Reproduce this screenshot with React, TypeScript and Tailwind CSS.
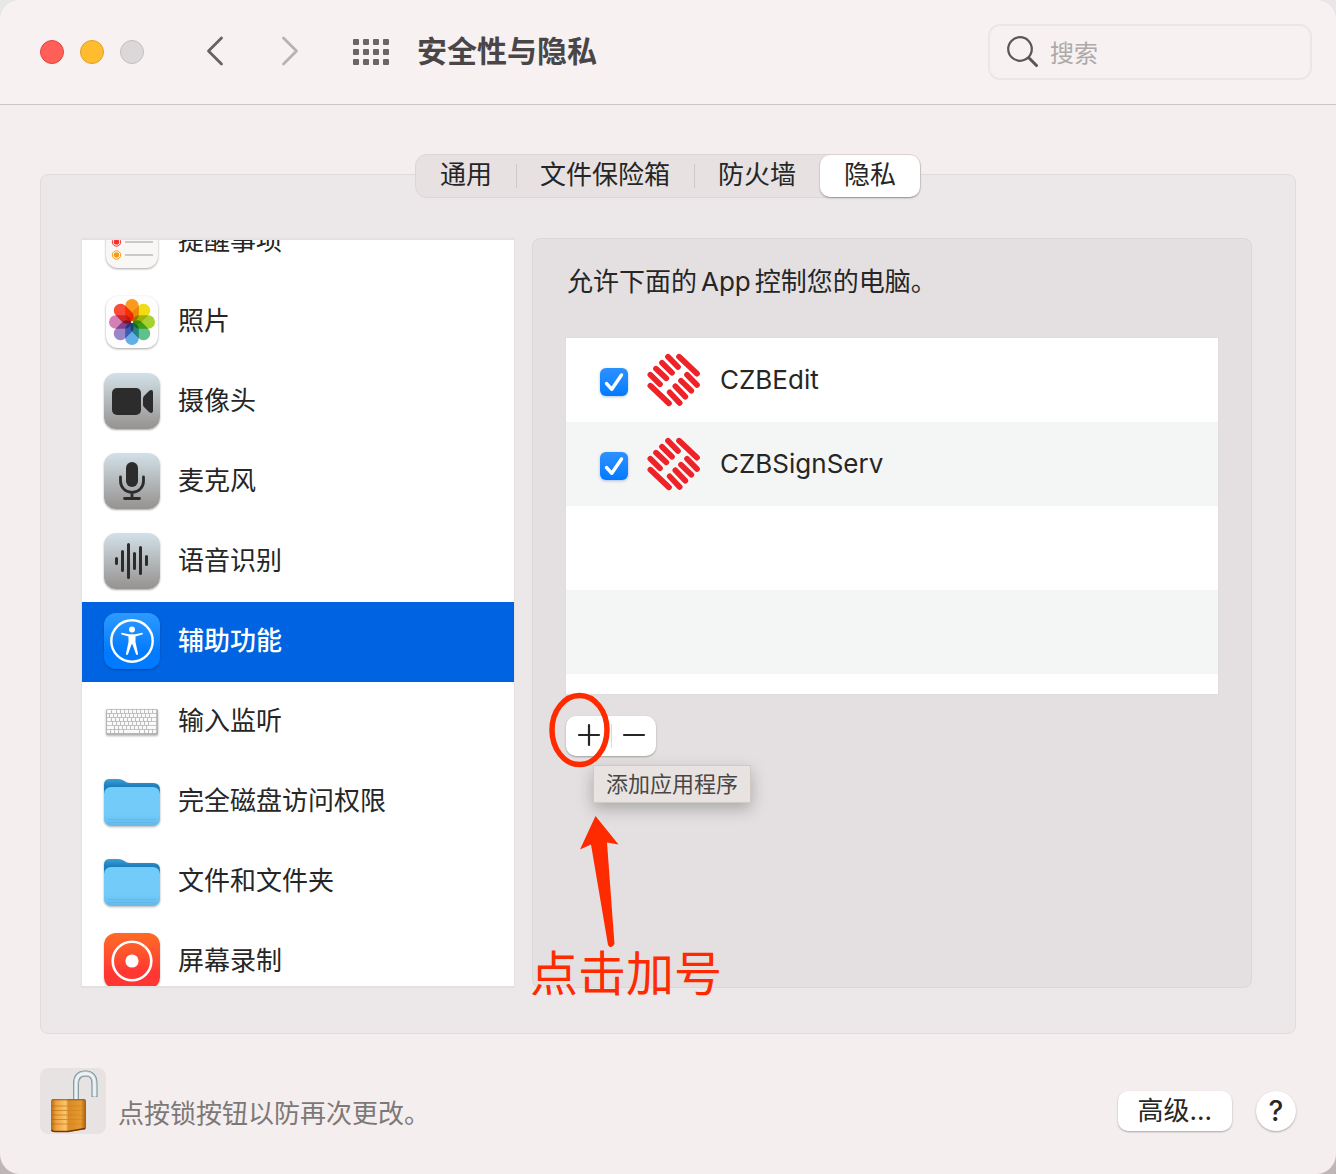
import { useState, type ReactNode } from "react";

type TabId = "general" | "filevault" | "firewall" | "privacy";
type AppEntry = { id: string; name: string; allowed: boolean };

const tabs: { id: TabId; label: string }[] = [
  { id: "general", label: "通用" },
  { id: "filevault", label: "文件保险箱" },
  { id: "firewall", label: "防火墙" },
  { id: "privacy", label: "隐私" },
];

// Icons of the sidebar, all drawn on a 56x56 tile

function RemindersIcon() {
  return (
    <svg viewBox="0 -1 56 56" className="size-14 drop-shadow-[0_1px_1px_rgba(0,0,0,0.35)]" aria-hidden="true">
      <rect x="2" y="2" width="52" height="52" rx="12" fill="#f8f7f6" />
      {[
        { y: 15, color: "#2f8cf7" },
        { y: 28, color: "#f5322d" },
        { y: 41, color: "#f29b13" },
      ].map((row) => (
        <g key={row.y}>
          <circle cx="12.5" cy={row.y} r="4.200" fill="#fff" stroke={row.color} strokeWidth="1" />
          <circle cx="12.5" cy={row.y} r="2.800" fill={row.color} />
          <path d={`M21 ${row.y}h28`} stroke="#bdbdbd" strokeWidth="1.600" />
        </g>
      ))}
    </svg>
  );
}

function PhotosIcon() {
  const petals = ["#fb9a1c", "#f0dc14", "#a6d22f", "#5dc08d", "#62aee6", "#9a86c9", "#d580b5", "#fb4a37"];
  return (
    <svg viewBox="0 -1 56 56" className="size-14 drop-shadow-[0_1px_1px_rgba(0,0,0,0.35)]" aria-hidden="true">
      <rect x="2" y="2" width="52" height="52" rx="12" fill="#fdfdfd" />
      <g className="isolate">
        {petals.map((color, i) => (
          <rect
            key={color}
            x="21.2"
            y="5"
            width="13.600"
            height="22.500"
            rx="6.800"
            fill={color}
            transform={`rotate(${i * 45} 28 28)`}
            className="mix-blend-multiply"
          />
        ))}
      </g>
      <circle cx="28" cy="28" r="1" fill="#fff" />
    </svg>
  );
}

function GrayTile({ children }: { children: ReactNode }) {
  return (
    <span className="flex size-14 rounded-xl bg-linear-to-b from-[#d3e1e8] to-[#969290] shadow-[0_1px_2px_rgba(0,0,0,0.35)]">
      <svg viewBox="0 0 56 56" className="size-14" fill="#2c2c2c" aria-hidden="true">
        {children}
      </svg>
    </span>
  );
}

function CameraIcon() {
  return (
    <GrayTile>
      <rect x="8" y="15" width="29" height="27" rx="5" />
      <path d="M39 25.500q0-1.500 1-2.500l5-5q3-2 4 .5v20q-1 2.500-4 .5l-5-5q-1-1-1-2.500z" />
    </GrayTile>
  );
}

function MicrophoneIcon() {
  return (
    <GrayTile>
      <rect x="22" y="9" width="12" height="25" rx="6" />
      <path
        d="M16.500 24v4a11.500 11.500 0 0 0 23 0v-4M28 40v5M20.500 45.500h15"
        fill="none"
        stroke="#2c2c2c"
        strokeWidth="2.8"
        strokeLinecap="round"
      />
    </GrayTile>
  );
}

function SpeechIcon() {
  return (
    <GrayTile>
      <path
        d="M12.500 25.500v5M18.500 18.500v19M24.500 11.500v33M30.500 20.500v15M36.500 14.500v26M42.500 23.500v8"
        fill="none"
        stroke="#2c2c2c"
        strokeWidth="3"
        strokeLinecap="round"
      />
    </GrayTile>
  );
}

function AccessibilityIcon() {
  return (
    <span className="flex size-14 rounded-xl bg-linear-to-b from-[#2b9bff] to-[#007aff] to-70% shadow-[0_1px_2px_rgba(0,0,0,0.3)]">
      <svg viewBox="0 0 56 56" className="size-14" fill="#fff" aria-hidden="true">
        <circle cx="28" cy="28" r="20.7" fill="none" stroke="#fff" strokeWidth="2.4" />
        <circle cx="28" cy="16.500" r="3" />
        <path d="M17.600 19.700l7.400 1.500h6l7.400-1.500q1.300 1-.2 1.900l-6.700 1.800v5.600l2.600 12q-.6 1.600-2 .5l-3.700-10.200h-.8l-3.700 10.200q-1.400 1.100-2-.5l2.600-12v-5.600l-6.700-1.800q-1.500-.9-.2-1.900z" />
      </svg>
    </span>
  );
}

function KeyboardIcon() {
  const rows = [
    { y: 17, x: [4, 9, 14, 18, 22, 26, 30, 34, 38, 42, 46, 50] },
    { y: 21, x: [4, 7, 11, 15, 19, 23, 27, 31, 35, 39, 43, 47] },
    { y: 25, x: [4, 9, 13, 17, 21, 25, 29, 33, 37, 41, 45, 49] },
    { y: 29, x: [4, 10, 14, 18, 22, 26, 30, 34, 38, 42, 46] },
    { y: 33, x: [4, 12, 16, 20, 24, 28, 32, 36, 40, 44] },
    { y: 37, x: [4, 8, 12, 16, 21, 37, 42, 46, 50] },
  ];
  return (
    <svg viewBox="0 -1 56 56" className="size-14 drop-shadow-[0_1px_1px_rgba(0,0,0,0.3)]" aria-hidden="true">
      <rect x="2" y="15" width="52" height="26" rx="1.500" fill="#b5b5b5" />
      {rows.map((row) =>
        row.x.map((x, i) => (
          <rect
            key={`${row.y}-${x}`}
            x={x - 1}
            y={row.y - 1.2}
            width={(row.x[i + 1] ?? 54) - x - 0.9}
            height="3.100"
            rx="0.500"
            fill="#fafafa"
          />
        ))
      )}
    </svg>
  );
}

function FolderIcon() {
  return (
    <svg viewBox="0 -1 56 56" className="size-14 drop-shadow-[0_1px_1px_rgba(0,0,0,0.3)]" aria-hidden="true">
      <defs>
        <linearGradient id="folder-back" x1="0" y1="0" x2="0" y2="1">
          <stop offset="0" stopColor="#3b9fd6" />
          <stop offset="0.250" stopColor="#1b7fbd" />
        </linearGradient>
        <linearGradient id="folder-front" x1="0" y1="0" x2="0" y2="1">
          <stop offset="0.700" stopColor="#72cbf9" />
          <stop offset="1" stopColor="#64baeb" />
        </linearGradient>
      </defs>
      <path d="M0 10.500Q0 5 6 5h8c6 0 7 4 12 4h23q7 0 7 7v18H0z" fill="url(#folder-back)" />
      <rect y="13" width="56" height="39" rx="7" fill="url(#folder-front)" />
      <path d="M4 45.500h48M4 48.500h48" stroke="#5fb4e4" strokeWidth="0.700" />
    </svg>
  );
}

function ScreenRecordingIcon() {
  return (
    <span className="flex size-14 rounded-xl bg-linear-to-b from-[#ff6a25] to-[#ff3632] to-70% shadow-[0_1px_2px_rgba(0,0,0,0.3)]">
      <svg viewBox="0 0 56 56" className="size-14" aria-hidden="true">
        <circle cx="28" cy="28" r="19.300" fill="none" stroke="#fff" strokeWidth="2.600" />
        <circle cx="28" cy="28" r="6.600" fill="#fff" />
      </svg>
    </span>
  );
}

function BankLogo() {
  return (
    <svg viewBox="22 25 162 162" className="size-[54px] shrink-0" aria-hidden="true">
      <path
        d="M85 36l30 31M67 54l30 30M49 72l31 29M32 90l29 29M118 36l54 51M32 123l56 53M142 90l30 31M124 108l31 30M107 125l30 31M90 143l30 32"
        stroke="#ee2229"
        strokeWidth="17"
        strokeLinecap="round"
      />
    </svg>
  );
}

function PadlockIcon() {
  return (
    <svg viewBox="0 0 66 66" className="size-[66px]" aria-hidden="true">
      <defs>
        <linearGradient id="lock-body" x1="0" y1="0" x2="1" y2="0">
          <stop offset="0" stopColor="#b96a12" />
          <stop offset="0.150" stopColor="#efa23c" />
          <stop offset="0.420" stopColor="#fbc56a" />
          <stop offset="0.500" stopColor="#d98a24" />
          <stop offset="0.850" stopColor="#e79a2f" />
          <stop offset="1" stopColor="#a75c0c" />
        </linearGradient>
      </defs>
      <path d="M36 33V16q0-10.500 9.500-10.500T54.500 17v12" fill="none" stroke="#71848b" strokeWidth="6" />
      <path d="M36 33V16q0-10.500 9.500-10.500T54.500 17v11.500" fill="none" stroke="#b4c3c8" strokeWidth="4.800" />
      <path d="M36 33V16q0-10.500 9.500-10.500T54.500 17v11.500" fill="none" stroke="#edf3f5" strokeWidth="2.800" />
      <path d="M11 33q0-2 3-2h29q3 0 3 2v27q0 1-1.500 1.500L28 64H13q-2 0-2-2z" fill="url(#lock-body)" />
      <path d="M11.500 38H27M11.500 42.500H27M11.500 47H27M11.500 51.500H27M11.500 56H27" stroke="#a85d0e" strokeOpacity="0.500" strokeWidth="1.200" />
      <path d="M27 38h18.500M27 42.500h18.500M27 47h18.500M27 51.500h18.500M27 56h18" stroke="#b86f19" strokeOpacity="0.300" strokeWidth="1" />
      <path d="M11.500 62q1 1.500 3 1.500H28l17-3" fill="none" stroke="#7a3504" strokeWidth="1.400" />
      <path d="M12 31.800h33" stroke="#8f5a1c" strokeWidth="1" />
    </svg>
  );
}

const categories: { id: string; label: string; icon: ReactNode }[] = [
  { id: "reminders", label: "提醒事项", icon: <RemindersIcon /> },
  { id: "photos", label: "照片", icon: <PhotosIcon /> },
  { id: "camera", label: "摄像头", icon: <CameraIcon /> },
  { id: "microphone", label: "麦克风", icon: <MicrophoneIcon /> },
  { id: "speech", label: "语音识别", icon: <SpeechIcon /> },
  { id: "accessibility", label: "辅助功能", icon: <AccessibilityIcon /> },
  { id: "input", label: "输入监听", icon: <KeyboardIcon /> },
  { id: "disk", label: "完全磁盘访问权限", icon: <FolderIcon /> },
  { id: "files", label: "文件和文件夹", icon: <FolderIcon /> },
  { id: "screen", label: "屏幕录制", icon: <ScreenRecordingIcon /> },
];

function Toolbar() {
  return (
    <header className="flex shrink-0 items-center border-b border-[#cdc6c7] bg-[#f7f1f1] py-6 pr-6 pl-10">
      <div className="flex gap-4">
        <button aria-label="关闭" className="size-6 rounded-full border border-[#e2453f] bg-[#ff5f57]" />
        <button aria-label="最小化" className="size-6 rounded-full border border-[#e0a028] bg-[#febc2e]" />
        <button aria-label="缩放" className="size-6 rounded-full border border-[#c4bfc0] bg-[#dcd8d9]" />
      </div>
      <div className="ml-15 flex gap-13 pb-0.5">
        <button aria-label="后退">
          <svg viewBox="0 0 24 30" className="h-[30px] w-6" fill="none" stroke="#666162" strokeWidth="2.800" strokeLinecap="round" strokeLinejoin="round">
            <path d="M17.500 2L4.500 15l13 13" />
          </svg>
        </button>
        <button aria-label="前进">
          <svg viewBox="0 0 24 30" className="h-[30px] w-6" fill="none" stroke="#b8b2b3" strokeWidth="2.800" strokeLinecap="round" strokeLinejoin="round">
            <path d="M3.500 2l13 13-13 13" />
          </svg>
        </button>
      </div>
      <button aria-label="显示全部" className="ml-12 grid grid-cols-4 gap-1 pl-px">
        {Array.from({ length: 12 }, (_, i) => (
          <span key={i} className="size-1.5 rounded-[1px] bg-[#6b6566]" />
        ))}
      </button>
      <h1 className="ml-7 pb-0.5 text-[30px] leading-10 font-bold text-[#4a4647]">安全性与隐私</h1>
      <label className="ml-auto flex h-14 w-[324px] items-center gap-2.5 rounded-xl border-2 border-[#ece6e6] pl-4">
        <svg viewBox="0 0 34 34" className="size-[34px] shrink-0" fill="none" stroke="#5a5556" aria-hidden="true">
          <circle cx="14" cy="14" r="11.800" strokeWidth="2.200" />
          <path d="M23 23l7.500 7.500" strokeWidth="3" strokeLinecap="round" />
        </svg>
        <input
          type="search"
          aria-label="搜索"
          placeholder="搜索"
          className="w-full min-w-0 bg-transparent pt-1 text-2xl outline-none placeholder:text-[#aea9a9]"
        />
      </label>
    </header>
  );
}

function Sidebar({ selected, onSelect }: { selected: string; onSelect: (id: string) => void }) {
  return (
    <nav className="w-[434px] shrink-0 overflow-hidden border-x border-y-2 border-[#e4e0e1] bg-white">
      {/* The list is scrolled part of a row down */}
      <ul className="-mt-[38px]">
        {categories.map((item) => (
          <li key={item.id}>
            <button
              onClick={() => onSelect(item.id)}
              className={`flex h-20 w-full items-center gap-[18px] pb-0.5 pl-[22px] text-left text-[26px] leading-8 ${
                item.id === selected ? "bg-[#0063e1] font-medium text-white" : "text-[#262626]"
              }`}
            >
              {item.icon}
              <span>{item.label}</span>
            </button>
          </li>
        ))}
      </ul>
    </nav>
  );
}

// Red marks over the add button: ring, arrow and caption
function Annotation() {
  return (
    <>
      <svg viewBox="0 0 100 270" className="pointer-events-none absolute -top-6 -left-5 h-[270px] w-[100px]" aria-hidden="true">
        <ellipse cx="33.500" cy="38" rx="27.500" ry="34.500" fill="none" stroke="#ff2b00" strokeWidth="5.500" />
        <path d="M49.500 124L34 157.500l11-5L62 253q3 5 6.500-1L61 150.500l11.500 2z" fill="#ff2b00" />
      </svg>
      <p className="pointer-events-none absolute top-[228px] -left-9 text-5xl leading-[60px] whitespace-nowrap text-[#ff2b00]">
        点击加号
      </p>
    </>
  );
}

function AppPanel() {
  const [apps, setApps] = useState<AppEntry[]>([
    { id: "edit", name: "CZBEdit", allowed: true },
    { id: "sign", name: "CZBSignServ", allowed: true },
  ]);

  const toggle = (id: string) =>
    setApps(apps.map((app) => (app.id === id ? { ...app, allowed: !app.allowed } : app)));

  return (
    <section className="min-w-0 flex-1 rounded-lg border border-[#dbd7d8] bg-[#e4e0e1] px-8 pt-[25px]">
      <h2 className="pl-0.5 text-[26px] leading-9 text-[#262626]">
        允许下面的<span className="mx-1">App</span>控制您的电脑。
      </h2>
      <ul className="mt-[37px] h-[358px] overflow-hidden border border-[#e0dcdd] bg-white">
        {apps.map((app) => (
          <li key={app.id} className="even:bg-[#f4f5f5]">
            <label className="flex h-[84px] items-center gap-[19px] pl-[34px] text-[26px] text-[#262626]">
              <span className="relative mt-1 flex size-7 shrink-0">
                <input
                  type="checkbox"
                  checked={app.allowed}
                  onChange={() => toggle(app.id)}
                  className="peer size-7 appearance-none rounded-md bg-white shadow-[0_1px_3px_rgba(0,60,160,0.3)] checked:bg-linear-to-b checked:from-[#2b91ff] checked:to-[#007aff]"
                />
                <svg
                  viewBox="0 0 28 28"
                  className="pointer-events-none invisible absolute inset-0 size-7 peer-checked:visible"
                  fill="none"
                  stroke="#fff"
                  strokeWidth="3.400"
                  strokeLinecap="round"
                  strokeLinejoin="round"
                  aria-hidden="true"
                >
                  <path d="M6.500 15.500l5.300 5.800L21.500 7" />
                </svg>
              </span>
              <BankLogo />
              <span className="pb-0.5">{app.name}</span>
            </label>
          </li>
        ))}
        <li className="h-[84px]" />
        <li className="h-[84px] bg-[#f4f5f5]" />
      </ul>
      <div className="relative mt-[21px] ml-px inline-flex h-10 items-center rounded-[10px] bg-white shadow-[0_1px_2px_rgba(0,0,0,0.3)]">
        <button aria-label="添加应用程序" aria-describedby="add-tip" className="flex h-10 w-[45px] items-center justify-center pb-0.5">
          <svg viewBox="0 0 24 24" className="size-6" stroke="#262626" strokeWidth="2.200" strokeLinecap="round">
            <path d="M2 12h20M12 2v20" />
          </svg>
        </button>
        <span className="h-6 w-px bg-[#dedada]" />
        <button aria-label="移除应用程序" className="flex h-10 w-11 items-center justify-center pb-0.5">
          <svg viewBox="0 0 24 24" className="size-6" stroke="#262626" strokeWidth="2.200" strokeLinecap="round">
            <path d="M2 12h20" />
          </svg>
        </button>
        <div
          id="add-tip"
          role="tooltip"
          className="absolute top-[49px] left-[27px] border border-[#cfc9c8] bg-[#e8e3e1] px-3 py-0.5 text-[22px] leading-8 whitespace-nowrap text-[#484646] shadow-[0_6px_16px_rgba(0,0,0,0.25)]"
        >
          添加应用程序
        </div>
        <Annotation />
      </div>
    </section>
  );
}

export default function App() {
  const [tab, setTab] = useState<TabId>("privacy");
  const [category, setCategory] = useState("accessibility");

  return (
    <div className="h-screen bg-linear-to-b from-[#e8e6e6] to-[#bdb5b6] font-['Inter','Noto_Sans_CJK_SC',sans-serif]">
      <div className="flex h-full flex-col overflow-hidden rounded-[20px] bg-[#f4eeee]">
        <Toolbar />

        <main className="flex min-h-0 flex-1 flex-col px-10 pt-[49px]">
          <div role="tablist" className="relative z-10 flex self-center rounded-xl border border-[#dcd6d6] bg-[#e7e1e1]">
            {tabs.map((item, i) => (
              <div key={item.id} className="flex items-center">
                {i === 1 || i === 2 ? <span className="-mr-px h-6 w-px bg-[#cfc9c9]" /> : null}
                <button
                  role="tab"
                  aria-selected={tab === item.id}
                  onClick={() => setTab(item.id)}
                  className={`h-[42px] rounded-[10px] px-6 pb-0.5 text-[26px] leading-8 text-[#262626] ${
                    tab === item.id ? "bg-white shadow-[0_1px_2px_rgba(0,0,0,0.35)]" : ""
                  }`}
                >
                  {item.label}
                </button>
              </div>
            ))}
          </div>

          <div className="-mt-6 flex min-h-0 flex-1 gap-[17px] rounded-lg border border-[#e0dbdc] bg-[#ece8e9] pt-[63px] pr-[43px] pb-[45px] pl-10">
            <Sidebar selected={category} onSelect={setCategory} />
            <AppPanel />
          </div>
        </main>

        <footer className="flex shrink-0 items-end px-10 pt-[34px] pb-10">
          <button aria-label="锁定" className="rounded-lg bg-[#e8e3e3]">
            <PadlockIcon />
          </button>
          <p className="ml-3 text-[26px] leading-10 text-[#7d7878]">点按锁按钮以防再次更改。</p>
          <div className="mb-[3px] ml-auto flex items-center gap-6">
            <button className="h-10 rounded-[10px] bg-white px-5 text-[26px] leading-8 text-[#262626] shadow-[0_1px_2px_rgba(0,0,0,0.3)]">
              高级...
            </button>
            <button
              aria-label="帮助"
              className="size-10 rounded-full bg-white text-[28px] leading-10 font-medium text-[#262626] shadow-[0_1px_2px_rgba(0,0,0,0.3)]"
            >
              ?
            </button>
          </div>
        </footer>
      </div>
    </div>
  );
}
